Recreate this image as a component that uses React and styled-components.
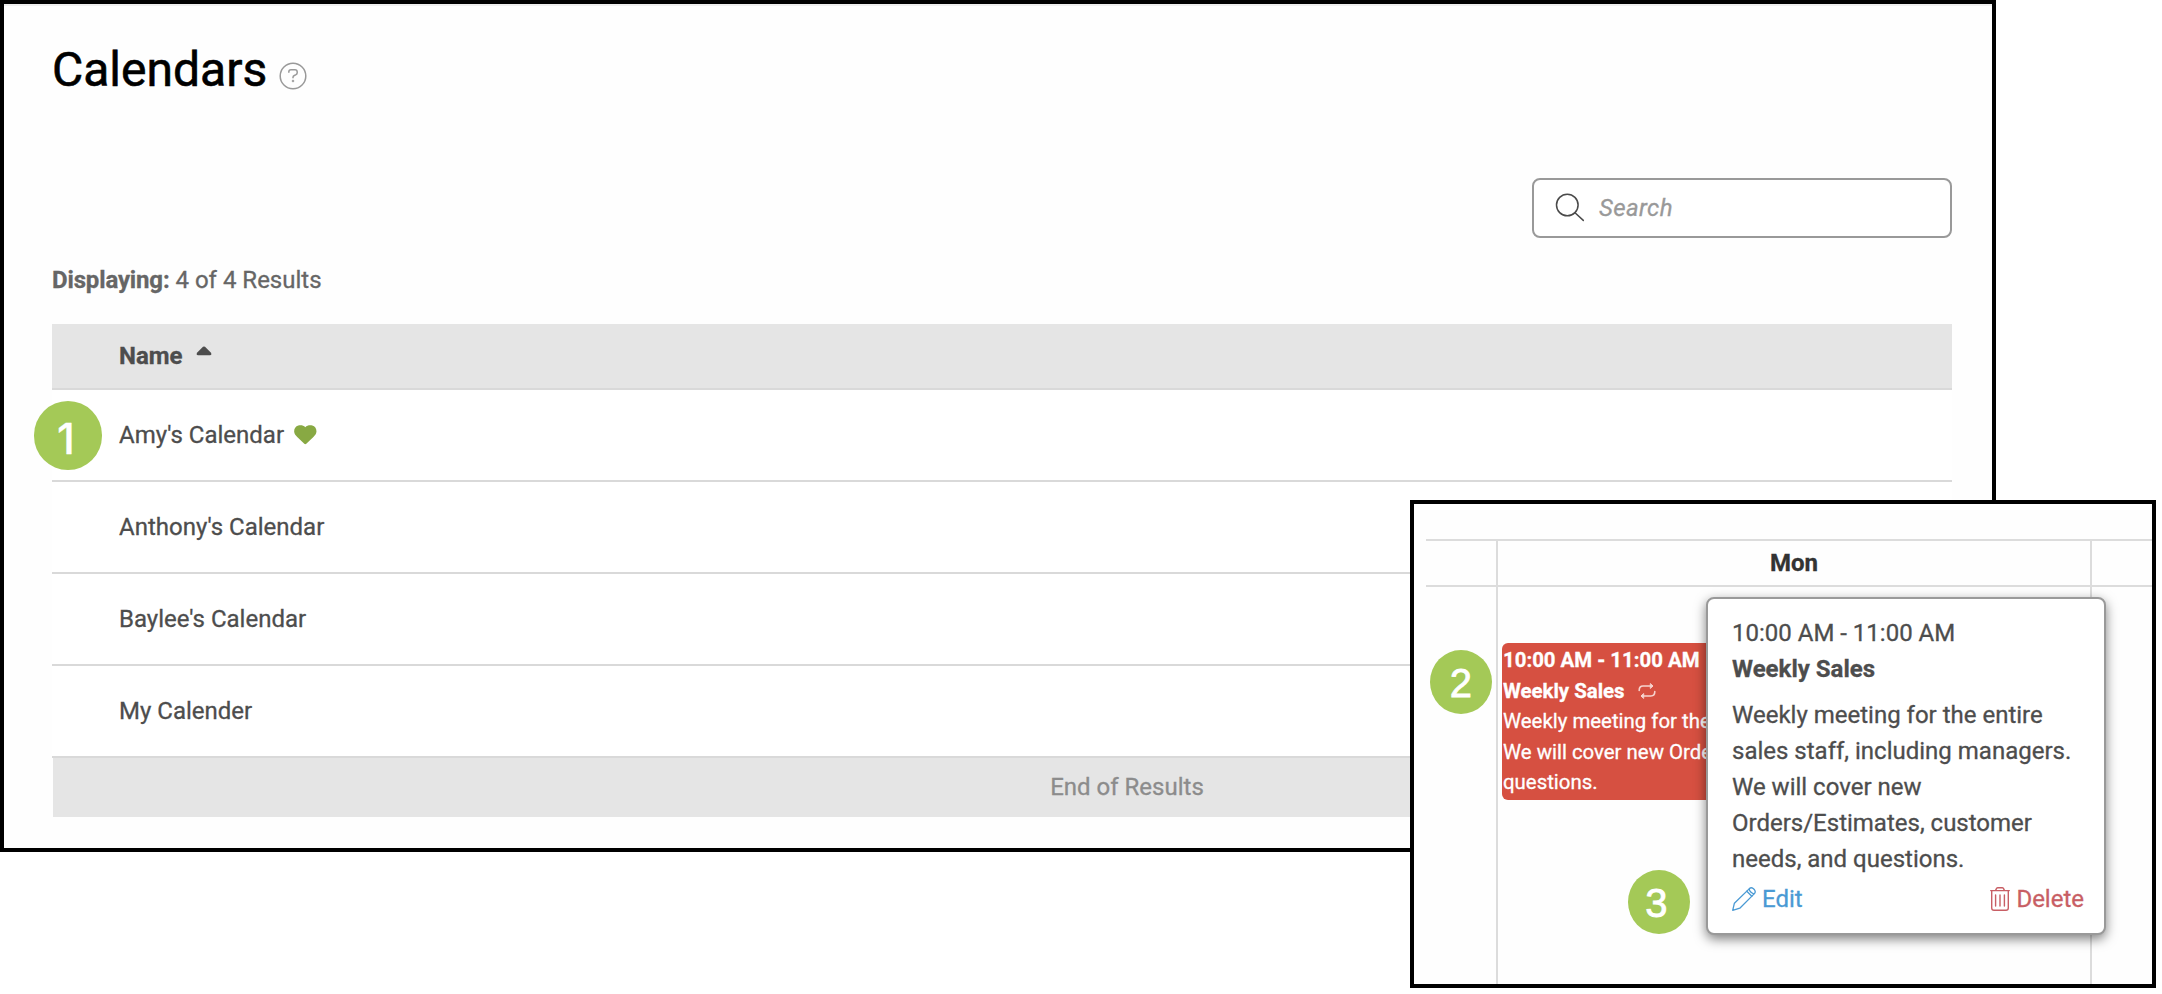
import styled, { createGlobalStyle } from "styled-components";

const calendars = [
    { name: "Amy's Calendar", favorite: true, badge: "1" },
    { name: "Anthony's Calendar" },
    { name: "Baylee's Calendar" },
    { name: "My Calender" }
];

export default function App(){
    return <>
    <GlobalStyle />
    <Page>
        <Panel>
            <TitleRow>
                <Title>Calendars</Title>
                <HelpIcon />
            </TitleRow>
            <SearchBox>
                <SearchIcon />
                <span>Search</span>
            </SearchBox>
            <Displaying><b>Displaying:</b> 4 of 4 Results</Displaying>
            <TableHead>
                <b>Name</b>
                <SortIcon />
            </TableHead>
            {calendars.map((calendar) =>
                <Row key={calendar.name}>
                    {calendar.badge && <RowBadge>{calendar.badge}</RowBadge>}
                    <span>{calendar.name}</span>
                    {calendar.favorite && <HeartIcon />}
                </Row>
            )}
            <TableFooter>End of Results</TableFooter>
        </Panel>

        <Inset>
            <Week>
                <HeadCell />
                <HeadCell $line>Mon</HeadCell>
                <HeadCell $line />
                <DayCell />
                <DayCell $line>
                    <Event>
                        <b>10:00 AM - 11:00 AM</b>
                        <EventTitle>Weekly Sales <RepeatIcon /></EventTitle>
                        <div>Weekly meeting for the</div>
                        <div>We will cover new Orders</div>
                        <div>questions.</div>
                    </Event>
                </DayCell>
                <DayCell $line />
            </Week>
            <InsetBadge $left={15.7} $top={146}>2</InsetBadge>
            <InsetBadge $left={213.7} $top={366} $shift={5}>3</InsetBadge>
            <Popover>
                <div>10:00 AM - 11:00 AM</div>
                <b>Weekly Sales</b>
                <Description>
                    Weekly meeting for the entire sales staff, including managers. We will cover new Orders/Estimates, customer needs, and questions.
                </Description>
                <Actions>
                    <Action $color="#4a9ad4"><PencilIcon />Edit</Action>
                    <Action $color="#c85e64"><TrashIcon />Delete</Action>
                </Actions>
            </Popover>
        </Inset>
    </Page>
    </>
}

function HelpIcon(){
    return <svg width="28" height="28" viewBox="0 0 28 28" fill="none" stroke="#999" strokeWidth="1.5">
        <circle cx="14" cy="14" r="12.8"/>
        <path d="M9.8 10.8V10q0-2.2 2.2-2.2h4q2.2 0 2.2 2.2v.8q0 1.5-1.5 2.1l-1.4.6q-1.3.6-1.3 1.8v.9"/>
        <circle cx="14" cy="19" r="1" fill="#999" strokeWidth="0.5"/>
    </svg>
}

function SearchIcon(){
    return <svg width="30" height="30" viewBox="0 0 30 30" fill="none" stroke="#4a4a4a" strokeWidth="1.5" strokeLinecap="round">
        <circle cx="12.3" cy="12" r="10.8"/>
        <path d="M20 19.7L28.3 27.4"/>
    </svg>
}

function SortIcon(){
    return <svg width="16" height="10" viewBox="0 0 16 10">
        <path d="M7 .8Q8 0 9 .8L15 6.7Q16 9.2 14 9.2H2Q0 9.2 1 6.7Z" fill="#4d4d4d"/>
    </svg>
}

function HeartIcon(){
    return <svg width="23" height="20" viewBox="0 0 23 20">
        <path d="M11.3 2.3C13 .1 16.2-.1 18.3.5C21.2 1.3 22.8 4 22.4 7.1C22.1 9.2 20.9 10.5 19.4 12L12.3 18.8Q11.3 19.7 10.3 18.8L3.2 12C1.7 10.5.5 9.2.2 7.1C-.1 4 1.4 1.3 4.3.5C6.4-.1 9.6.1 11.3 2.3Z" fill="#88a943"/>
    </svg>
}

function RepeatIcon(){
    return <svg width="18" height="18" viewBox="0 0 18 18" fill="none" stroke="#f6d3ce" strokeWidth="1.6" strokeLinecap="round" strokeLinejoin="round">
        <path d="M1.2 8.4Q1.2 4 5 4H14"/>
        <path d="M12.6 1.8L15 4L12.6 6.2Z" fill="#f6d3ce" strokeWidth="1"/>
        <path d="M16.8 9.6Q16.8 14 13 14H4"/>
        <path d="M5.4 11.8L3 14L5.4 16.2Z" fill="#f6d3ce" strokeWidth="1"/>
    </svg>
}

function PencilIcon(){
    return <svg width="24" height="24" viewBox="0 0 24 24" fill="none" stroke="currentColor" strokeWidth="1.3" strokeLinejoin="round" strokeLinecap="round">
        <path d="M.7 23.3L2.4 16.2L17.4 1.6Q19.2 0 21.2 1.5L22.5 2.8Q24 4.8 22.4 6.6L7.8 21.2Z"/>
        <path d="M14.8 4.2L19.8 9.2M17.2 2.2Q18 5.7 21.8 6.9"/>
    </svg>
}

function TrashIcon(){
    return <svg width="20" height="24" viewBox="0 0 20 24" fill="none" stroke="currentColor" strokeWidth="1.4" strokeLinecap="round" strokeLinejoin="round">
        <path d="M.7 3.6H19.3M5.6 3.4L6.6 1.3Q7 .7 7.8 .7H12.2Q13 .7 13.4 1.3L14.4 3.4"/>
        <path d="M1.7 3.8V21Q1.7 23.3 4 23.3H16Q18.3 23.3 18.3 21V3.8"/>
        <path d="M5.6 8V19M10 8V19M14.4 8V19"/>
    </svg>
}

const GlobalStyle = createGlobalStyle`
    body{
        margin:0;
        background:#fff;
    }

    *{
        box-sizing:border-box;
    }

    svg{
        display:block;
        flex:none;
    }
`

const Page = styled.div`
    position:relative;
    width:2162px;
    height:994px;
    overflow:hidden;
    font-family:Roboto, sans-serif;
    font-size:24px;
    color:#4d4d4d;
    -webkit-text-stroke:0.3px;
`

const Panel = styled.div`
    width:1996px;
    height:852px;
    padding:38px 40px 0 48px;
    border:4px solid #000;
    background:#fefefe;
    box-shadow:inset 0 2px 0 #efefef;
    display:flex;
    flex-direction:column;
`

const TitleRow = styled.div`
    display:flex;
    align-items:flex-start;
    gap:12px;
    height:56px;

    svg{
        margin-top:20px;
    }
`

const Title = styled.h1`
    margin:0;
    font-size:48px;
    line-height:56px;
    font-weight:400;
    color:#000;
    -webkit-text-stroke:0.6px;
`

const SearchBox = styled.div`
    align-self:flex-end;
    width:420px;
    height:60px;
    margin-top:80px;
    padding-left:21px;
    border:2px solid #999;
    border-radius:8px;
    background:#fff;
    display:flex;
    align-items:center;
    gap:14px;
    font-style:italic;
    letter-spacing:0.4px;
    color:#999;
`

const Displaying = styled.div`
    margin:28px 0 30px;
    line-height:28px;
    color:#666;

    b{
        letter-spacing:-0.15px;
    }
`

const TableHead = styled.div`
    height:66px;
    padding-left:67px;
    border-bottom:2px solid #d9d9d9;
    background:#e5e5e5;
    display:flex;
    align-items:center;
    gap:13px;

    svg{
        margin-bottom:10px;
    }
`

const Row = styled.div`
    position:relative;
    height:92px;
    padding-left:67px;
    border-bottom:2px solid #d9d9d9;
    background:#fff;
    display:flex;
    align-items:center;
    gap:10px;
`

const TableFooter = styled.div`
    height:59px;
    margin-left:1px;
    padding:0 0 2px 249px;
    background:#e5e5e5;
    color:#8c8c8c;
    display:flex;
    justify-content:center;
    align-items:center;
`

const Badge = styled.div`
    position:absolute;
    border-radius:50%;
    background:#a4c957;
    color:#fff;
    display:flex;
    justify-content:center;
    align-items:center;
`

const RowBadge = styled(Badge)`
    left:-18.3px;
    top:11.4px;
    width:68.6px;
    height:68.6px;
    padding:5px 4px 0 0;
    font-family:Inter, sans-serif;
    font-size:43px;
    font-weight:500;
`

const InsetBadge = styled(Badge)`
    left:${props => props.$left}px;
    top:${props => props.$top}px;
    width:62.4px;
    height:64.4px;
    padding:2px ${props => props.$shift || 0}px 0 0;
    font-family:"Liberation Sans", sans-serif;
    font-size:40px;
    -webkit-text-stroke:0.8px #fff;
`

const Inset = styled.div`
    position:absolute;
    left:1410px;
    top:500px;
    width:746px;
    height:488px;
    padding:35px 0 0 12px;
    border:4px solid #000;
    background:#fefefe;
`

const Week = styled.div`
    height:100%;
    display:grid;
    grid-template-columns:70px 594px 1fr;
    grid-template-rows:48px 1fr;
`

const HeadCell = styled.div`
    border:solid #dcdcdc;
    border-width:2px 0 2px ${props => props.$line ? "2px" : "0"};
    display:flex;
    justify-content:center;
    align-items:center;
    font-weight:700;
    color:#333;
    padding-bottom:1px;
`

const DayCell = styled.div`
    border-left:${props => props.$line ? "2px solid #dcdcdc" : "0"};
    padding:56px 0 0 4px;
`

/* the right edge runs under the popover */
const Event = styled.div`
    width:205px;
    height:157px;
    padding:2px 0 0 1px;
    border-radius:6px 0 0 6px;
    background:#d65041;
    color:#fff;
    font-size:20.4px;
    line-height:30.5px;
    white-space:nowrap;
    overflow:hidden;
`

const EventTitle = styled.div`
    display:flex;
    align-items:center;
    gap:13px;
    font-weight:700;
`

const Popover = styled.div`
    position:absolute;
    left:292px;
    top:93px;
    width:400px;
    height:338px;
    padding:16px 20px 0 24px;
    border:2px solid #999;
    border-radius:8px;
    background:#fff;
    box-shadow:0 4px 12px rgba(0,0,0,0.5);
    line-height:36px;
`

const Description = styled.div`
    margin-top:10px;
`

const Actions = styled.div`
    display:flex;
    justify-content:space-between;
    margin-top:4px;
`

const Action = styled.div`
    display:flex;
    align-items:center;
    gap:6px;
    color:${props => props.$color};
`
